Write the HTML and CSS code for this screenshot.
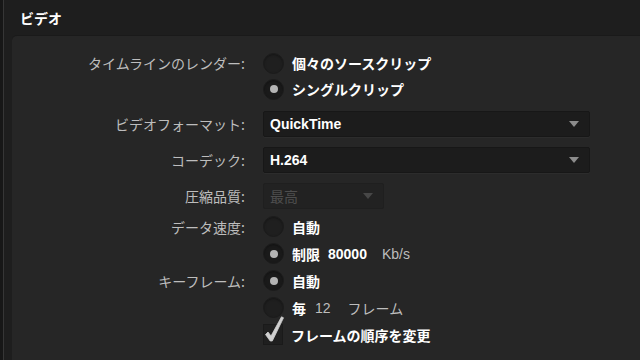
FILE: index.html
```html
<!DOCTYPE html>
<html lang="ja">
<head>
<meta charset="utf-8">
<link rel="stylesheet" href="styles.css">
</head>
<body>
<div class="app">
  <div class="header">ビデオ</div>
  <div class="panel">
    <div class="row">
      <div class="label">タイムラインのレンダー:</div>
      <div class="ctrl"><span class="radio"></span><span class="val">個々のソースクリップ</span></div>
    </div>
    <div class="row">
      <div class="label"></div>
      <div class="ctrl"><span class="radio on"></span><span class="val">シングルクリップ</span></div>
    </div>
    <div class="row drop-first">
      <div class="label">ビデオフォーマット:</div>
      <div class="ctrl"><div class="select"><span class="sel-text">QuickTime</span><span class="arrow"></span></div></div>
    </div>
    <div class="row drop-next">
      <div class="label">コーデック:</div>
      <div class="ctrl"><div class="select"><span class="sel-text">H.264</span><span class="arrow"></span></div></div>
    </div>
    <div class="row drop-next">
      <div class="label">圧縮品質:</div>
      <div class="ctrl"><div class="select disabled"><span class="sel-text">最高</span><span class="arrow"></span></div></div>
    </div>
    <div class="row opt first-opt">
      <div class="label">データ速度:</div>
      <div class="ctrl"><span class="radio"></span><span class="val">自動</span></div>
    </div>
    <div class="row opt">
      <div class="label"></div>
      <div class="ctrl"><span class="radio on"></span><span class="val">制限</span><span class="num">80000</span><span class="unit">Kb/s</span></div>
    </div>
    <div class="row opt">
      <div class="label">キーフレーム:</div>
      <div class="ctrl"><span class="radio on"></span><span class="val">自動</span></div>
    </div>
    <div class="row opt">
      <div class="label"></div>
      <div class="ctrl"><span class="radio"></span><span class="val">毎</span><span class="plain n12">12</span><span class="plain frames">フレーム</span></div>
    </div>
    <div class="row opt">
      <div class="label"></div>
      <div class="ctrl">
        <span class="check">
          <svg class="tick" width="24" height="27" viewBox="0 0 24 27"><path d="M3.5 18.5 L6 16 L9 20 L19.5 0.8 L21.5 1.8 L10.3 25 L8.2 25 Z" fill="#cfcfcf" stroke="#cfcfcf" stroke-width="0.8" stroke-linejoin="round"/></svg>
        </span>
        <span class="val">フレームの順序を変更</span>
      </div>
    </div>
  </div>
</div>
</body>
</html>
```
FILE: styles.css
```css
html, body {
  margin: 0;
  padding: 0;
  background: #171717;
  height: 100%;
  overflow: hidden;
}
body {
  font-family: "Liberation Sans", "Noto Sans CJK JP", sans-serif;
  font-size: 14px;
  color: #fff;
}
.app {
  margin-left: 3px;
  border-left: 1px solid #363636;
  background: #1e1e1e;
  height: 360px;
  display: flex;
  flex-direction: column;
}
.header {
  height: 35px;
  padding-left: 16px;
  display: flex;
  align-items: center;
  font-family: "Noto Sans CJK JP", sans-serif;
  font-weight: bold;
  font-size: 14px;
  color: #fff;
}
.panel {
  flex: 1;
  margin-left: 8px;
  background: #262626;
  border-top: 1px solid #1a1a1a;
  border-top-left-radius: 5px;
  padding-top: 14px;
  display: flex;
  flex-direction: column;
}
.row {
  display: flex;
  align-items: center;
  height: 26px;
}
.row.drop-first { margin-top: 9px; }
.row.drop-next { margin-top: 10px; }
.row.opt { height: 27px; }
.row.first-opt { margin-top: 4px; }
.label {
  width: 233px;
  text-align: right;
  color: #bdbdbd;
  font-family: "Noto Sans CJK JP", sans-serif;
  font-size: 14px;
  flex: none;
}
.ctrl {
  margin-left: 18px;
  display: flex;
  align-items: center;
}
.radio {
  width: 19px;
  height: 19px;
  border-radius: 50%;
  background: #1f1f1f;
  border: 1px solid #1b1b1b;
  box-shadow: inset 0 1px 2px rgba(0,0,0,0.35);
  display: flex;
  align-items: center;
  justify-content: center;
  flex: none;
}
.radio.on {
  background: #1a1a1a;
}
.radio.on::after {
  content: "";
  width: 8px;
  height: 8px;
  border-radius: 50%;
  background: #b4b4b4;
}
.val {
  margin-left: 8px;
  font-family: "Liberation Sans", "Noto Sans CJK JP", sans-serif;
  font-weight: bold;
  color: #fff;
}
.num {
  margin-left: 8px;
  font-weight: bold;
  color: #fff;
}
.unit {
  margin-left: 15px;
  color: #bdbdbd;
}
.plain {
  color: #bdbdbd;
  font-family: "Liberation Sans", "Noto Sans CJK JP", sans-serif;
}
.n12 { margin-left: 9px; }
.frames { margin-left: 17px; }
.select {
  height: 24px;
  background: #1c1c1c;
  border: 1px solid #171717;
  border-radius: 2px;
  box-shadow: 0 1px 0 #2c2c2c;
  display: flex;
  align-items: center;
  justify-content: space-between;
  padding: 0 10px 0 6px;
  box-sizing: content-box;
  width: 309px;
}
.sel-text {
  font-weight: bold;
  color: #fff;
}
.arrow {
  width: 0;
  height: 0;
  border-left: 5px solid transparent;
  border-right: 5px solid transparent;
  border-top: 6px solid #8c8c8c;
}
.select.disabled {
  width: 103px;
  background: #222;
  border-color: #1f1f1f;
  box-shadow: none;
}
.select.disabled .sel-text {
  color: #4e4e4e;
  font-weight: normal;
  font-family: "Noto Sans CJK JP", sans-serif;
}
.select.disabled .arrow {
  border-top-color: #474747;
}
.check {
  position: relative;
  width: 18px;
  height: 19px;
  background: #1f1f1f;
  border: 1px solid #1a1a1a;
  flex: none;
}
.tick {
  position: absolute;
  left: -2px;
  top: -9px;
}
```
